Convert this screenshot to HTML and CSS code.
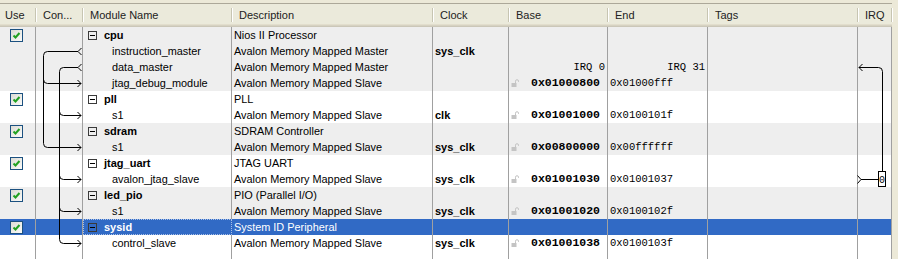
FILE: index.html
```html
<!DOCTYPE html>
<html lang="en">
  <head>
    <meta charset="UTF-8" />
    <title>System Contents</title>
    <link rel="stylesheet" href="styles.css">
  </head>
  <body>
    <div class="panel">
      <div class="head">
        <div class="hc">Use</div>
        <div class="hc">Con...</div>
        <div class="hc">Module Name</div>
        <div class="hc">Description</div>
        <div class="hc">Clock</div>
        <div class="hc">Base</div>
        <div class="hc">End</div>
        <div class="hc">Tags</div>
        <div class="hc">IRQ</div>
      </div>

      <div class="rows">
        <!-- cpu -->
        <div class="row shade">
          <div class="c use"><span class="chk"><svg width="11" height="11" viewBox="0 0 11 11"><path d="M2.5 5.5 L4.5 7.5 L8.5 3" /></svg></span></div>
          <div class="c"></div>
          <div class="c mod"><span class="tog"></span><b>cpu</b></div>
          <div class="c desc">Nios II Processor</div>
          <div class="c"></div>
          <div class="c"></div>
          <div class="c"></div>
          <div class="c"></div>
          <div class="c"></div>
        </div>
        <div class="row shade">
          <div class="c"></div>
          <div class="c"></div>
          <div class="c mod sub">instruction_master</div>
          <div class="c desc">Avalon Memory Mapped Master</div>
          <div class="c clk">sys_clk</div>
          <div class="c"></div>
          <div class="c"></div>
          <div class="c"></div>
          <div class="c"></div>
        </div>
        <div class="row shade">
          <div class="c"></div>
          <div class="c"></div>
          <div class="c mod sub">data_master</div>
          <div class="c desc">Avalon Memory Mapped Master</div>
          <div class="c"></div>
          <div class="c irq-label">IRQ 0</div>
          <div class="c irq-label">IRQ 31</div>
          <div class="c"></div>
          <div class="c"></div>
        </div>
        <div class="row shade">
          <div class="c"></div>
          <div class="c"></div>
          <div class="c mod sub">jtag_debug_module</div>
          <div class="c desc">Avalon Memory Mapped Slave</div>
          <div class="c"></div>
          <div class="c base"><svg class="lock" width="8" height="8" viewBox="0 0 8 8"><path d="M4.5 4 V2.2 a1.5 1.5 0 0 1 3 0 V3" /><rect x="0.5" y="4" width="5" height="4" /></svg>0x01000800</div>
          <div class="c end">0x01000fff</div>
          <div class="c"></div>
          <div class="c"></div>
        </div>

        <!-- pll -->
        <div class="row">
          <div class="c use"><span class="chk"><svg width="11" height="11" viewBox="0 0 11 11"><path d="M2.5 5.5 L4.5 7.5 L8.5 3" /></svg></span></div>
          <div class="c"></div>
          <div class="c mod"><span class="tog"></span><b>pll</b></div>
          <div class="c desc">PLL</div>
          <div class="c"></div>
          <div class="c"></div>
          <div class="c"></div>
          <div class="c"></div>
          <div class="c"></div>
        </div>
        <div class="row">
          <div class="c"></div>
          <div class="c"></div>
          <div class="c mod sub">s1</div>
          <div class="c desc">Avalon Memory Mapped Slave</div>
          <div class="c clk">clk</div>
          <div class="c base"><svg class="lock" width="8" height="8" viewBox="0 0 8 8"><path d="M4.5 4 V2.2 a1.5 1.5 0 0 1 3 0 V3" /><rect x="0.5" y="4" width="5" height="4" /></svg>0x01001000</div>
          <div class="c end">0x0100101f</div>
          <div class="c"></div>
          <div class="c"></div>
        </div>

        <!-- sdram -->
        <div class="row shade">
          <div class="c use"><span class="chk"><svg width="11" height="11" viewBox="0 0 11 11"><path d="M2.5 5.5 L4.5 7.5 L8.5 3" /></svg></span></div>
          <div class="c"></div>
          <div class="c mod"><span class="tog"></span><b>sdram</b></div>
          <div class="c desc">SDRAM Controller</div>
          <div class="c"></div>
          <div class="c"></div>
          <div class="c"></div>
          <div class="c"></div>
          <div class="c"></div>
        </div>
        <div class="row shade">
          <div class="c"></div>
          <div class="c"></div>
          <div class="c mod sub">s1</div>
          <div class="c desc">Avalon Memory Mapped Slave</div>
          <div class="c clk">sys_clk</div>
          <div class="c base"><svg class="lock" width="8" height="8" viewBox="0 0 8 8"><path d="M4.5 4 V2.2 a1.5 1.5 0 0 1 3 0 V3" /><rect x="0.5" y="4" width="5" height="4" /></svg>0x00800000</div>
          <div class="c end">0x00ffffff</div>
          <div class="c"></div>
          <div class="c"></div>
        </div>

        <!-- jtag_uart -->
        <div class="row">
          <div class="c use"><span class="chk"><svg width="11" height="11" viewBox="0 0 11 11"><path d="M2.5 5.5 L4.5 7.5 L8.5 3" /></svg></span></div>
          <div class="c"></div>
          <div class="c mod"><span class="tog"></span><b>jtag_uart</b></div>
          <div class="c desc">JTAG UART</div>
          <div class="c"></div>
          <div class="c"></div>
          <div class="c"></div>
          <div class="c"></div>
          <div class="c"></div>
        </div>
        <div class="row">
          <div class="c"></div>
          <div class="c"></div>
          <div class="c mod sub">avalon_jtag_slave</div>
          <div class="c desc">Avalon Memory Mapped Slave</div>
          <div class="c clk">sys_clk</div>
          <div class="c base"><svg class="lock" width="8" height="8" viewBox="0 0 8 8"><path d="M4.5 4 V2.2 a1.5 1.5 0 0 1 3 0 V3" /><rect x="0.5" y="4" width="5" height="4" /></svg>0x01001030</div>
          <div class="c end">0x01001037</div>
          <div class="c"></div>
          <div class="c"></div>
        </div>

        <!-- led_pio -->
        <div class="row shade">
          <div class="c use"><span class="chk"><svg width="11" height="11" viewBox="0 0 11 11"><path d="M2.5 5.5 L4.5 7.5 L8.5 3" /></svg></span></div>
          <div class="c"></div>
          <div class="c mod"><span class="tog"></span><b>led_pio</b></div>
          <div class="c desc">PIO (Parallel I/O)</div>
          <div class="c"></div>
          <div class="c"></div>
          <div class="c"></div>
          <div class="c"></div>
          <div class="c"></div>
        </div>
        <div class="row shade">
          <div class="c"></div>
          <div class="c"></div>
          <div class="c mod sub">s1</div>
          <div class="c desc">Avalon Memory Mapped Slave</div>
          <div class="c clk">sys_clk</div>
          <div class="c base"><svg class="lock" width="8" height="8" viewBox="0 0 8 8"><path d="M4.5 4 V2.2 a1.5 1.5 0 0 1 3 0 V3" /><rect x="0.5" y="4" width="5" height="4" /></svg>0x01001020</div>
          <div class="c end">0x0100102f</div>
          <div class="c"></div>
          <div class="c"></div>
        </div>

        <!-- sysid (selected) -->
        <div class="row selected">
          <div class="c use"><span class="chk"><svg width="11" height="11" viewBox="0 0 11 11"><path d="M2.5 5.5 L4.5 7.5 L8.5 3" /></svg></span></div>
          <div class="c"></div>
          <div class="c mod focus"><span class="tog"></span><b>sysid</b></div>
          <div class="c desc">System ID Peripheral</div>
          <div class="c"></div>
          <div class="c"></div>
          <div class="c"></div>
          <div class="c"></div>
          <div class="c"></div>
        </div>
        <div class="row">
          <div class="c"></div>
          <div class="c"></div>
          <div class="c mod sub">control_slave</div>
          <div class="c desc">Avalon Memory Mapped Slave</div>
          <div class="c clk">sys_clk</div>
          <div class="c base"><svg class="lock" width="8" height="8" viewBox="0 0 8 8"><path d="M4.5 4 V2.2 a1.5 1.5 0 0 1 3 0 V3" /><rect x="0.5" y="4" width="5" height="4" /></svg>0x01001038</div>
          <div class="c end">0x0100103f</div>
          <div class="c"></div>
          <div class="c"></div>
        </div>

        <div class="row filler">
          <div class="c"></div>
          <div class="c"></div>
          <div class="c"></div>
          <div class="c"></div>
          <div class="c"></div>
          <div class="c"></div>
          <div class="c"></div>
          <div class="c"></div>
          <div class="c"></div>
        </div>

        <!-- connection and irq wiring -->
        <svg class="wires" width="892" height="232" viewBox="0 0 892 232">
          <g class="wire">
            <!-- instruction_master -->
            <path d="M78 24.5 H47.5 Q43.5 24.5 43.5 28.5 V116.5 Q43.5 120.5 47.5 120.5 H81" />
            <path d="M43.5 52.5 Q43.5 56.5 47.5 56.5 H81" />
            <path d="M81.5 21 L78 24.5 L81.5 28" />
            <!-- data_master -->
            <path d="M78 40.5 H63.5 Q59.5 40.5 59.5 44.5 V212.5 Q59.5 216.5 63.5 216.5 H81" />
            <path d="M59.5 84.5 Q59.5 88.5 63.5 88.5 H81" />
            <path d="M59.5 148.5 Q59.5 152.5 63.5 152.5 H81" />
            <path d="M59.5 180.5 Q59.5 184.5 63.5 184.5 H81" />
            <path d="M81.5 37 L78 40.5 L81.5 44" />
            <!-- slave arrowheads -->
            <path d="M77.5 53 L81 56.5 L77.5 60" />
            <path d="M77.5 85 L81 88.5 L77.5 92" />
            <path d="M77.5 117 L81 120.5 L77.5 124" />
            <path d="M77.5 149 L81 152.5 L77.5 156" />
            <path d="M77.5 181 L81 184.5 L77.5 188" />
            <path d="M77.5 213 L81 216.5 L77.5 220" />
            <!-- irq -->
            <path d="M859 40.5 H878.5 Q882.5 40.5 882.5 44.5 V144" />
            <path d="M862.5 37 L859 40.5 L862.5 44" />
            <rect x="878.5" y="144.5" width="7" height="15" />
            <path d="M857.5 148.5 L861 152.5 L857.5 156.5" />
            <path d="M861 152.5 H878.5" />
          </g>
          <text class="irq-num" x="882" y="156">0</text>
        </svg>
      </div>
    </div>
  </body>
</html>
```

FILE: styles.css
```css
:root {
  --cols: 36px 47px 149px 201px 76px 99px 100px 150px 34px;
}

body {
  margin: 0;
  background: #ece9d8;
  font-family: "Liberation Sans", Arial, sans-serif;
  font-size: 10.9px;
  color: #000;
}

.panel {
  padding-top: 3px;
  width: 892px;
}

/* header */

.head {
  display: grid;
  grid-template-columns: var(--cols);
  align-items: center;
  height: 22px;
  border-top: 1px solid #aca899;
  border-bottom: 1px solid #cbc7b8;
  box-shadow: inset 0 -1px #d6d2c2, inset 0 -2px #e2decd;
  background: #ebeadb;
  font-size: 11px;
  color: #222;
}

.hc {
  height: 14px;
  line-height: 14px;
  padding-left: 7px;
  border-right: 1px solid #c7c5b2;
  box-shadow: 1px 0 #fff;
  white-space: nowrap;
}

.hc:first-child {
  padding-left: 5px;
}

/* body rows */

.rows {
  position: relative;
  background: #fff;
}

.row {
  display: grid;
  grid-template-columns: var(--cols);
  height: 16px;
  line-height: 16px;
}

.row.shade {
  background: #eeeeee;
}

.row.selected {
  background: #316ac5;
  color: #fff;
}

.row.filler {
  height: 8px;
}

.c {
  box-sizing: border-box;
  border-right: 1px solid #a0a0a0;
  white-space: nowrap;
  overflow: hidden;
}

.use {
  padding: 2px 0 0 10px;
}

.chk {
  display: block;
  width: 13px;
  height: 13px;
  box-sizing: border-box;
  border: 1px solid #1c5180;
  background: linear-gradient(135deg, #dcdcd5, #fbfbf9);
}

.chk svg {
  display: block;
}

.chk path {
  fill: none;
  stroke: #21a121;
  stroke-width: 2;
}

.mod {
  display: flex;
  align-items: center;
  padding-left: 5px;
}

.mod b {
  font-size: 11px;
}

.mod.sub {
  padding-left: 29px;
}

.mod.focus {
  border: 1px dotted #a9c0e6;
  padding-left: 4px;
}

.tog {
  width: 9px;
  height: 9px;
  box-sizing: border-box;
  border: 1px solid #3a3a3a;
  margin-right: 7px;
  position: relative;
}

.tog::after {
  content: "";
  position: absolute;
  left: 1px;
  right: 1px;
  top: 3px;
  height: 1px;
  background: #000;
}

.desc {
  padding-left: 2px;
}

.clk {
  padding-left: 2px;
  font-weight: bold;
  font-size: 11px;
}

.base {
  display: flex;
  align-items: center;
  padding-left: 2px;
  font-family: "Liberation Mono", "Courier New", monospace;
  font-weight: bold;
  font-size: 11.5px;
}

.lock {
  margin-right: 12px;
}

.lock path {
  fill: none;
  stroke: #c4c4c4;
}

.lock rect {
  fill: #c4c4c4;
}

.end {
  padding-left: 2px;
  font-family: "Liberation Mono", "Courier New", monospace;
  font-size: 10.5px;
}

.irq-label {
  text-align: right;
  padding-right: 2px;
  font-family: "Liberation Mono", "Courier New", monospace;
  font-size: 10.5px;
}

/* wiring overlay */

.wires {
  position: absolute;
  left: 0;
  top: 0;
  pointer-events: none;
}

.wire path,
.wire rect {
  fill: none;
  stroke: #000;
  stroke-width: 1;
}

.irq-num {
  font-family: "Liberation Mono", monospace;
  font-size: 10px;
  text-anchor: middle;
}
```
